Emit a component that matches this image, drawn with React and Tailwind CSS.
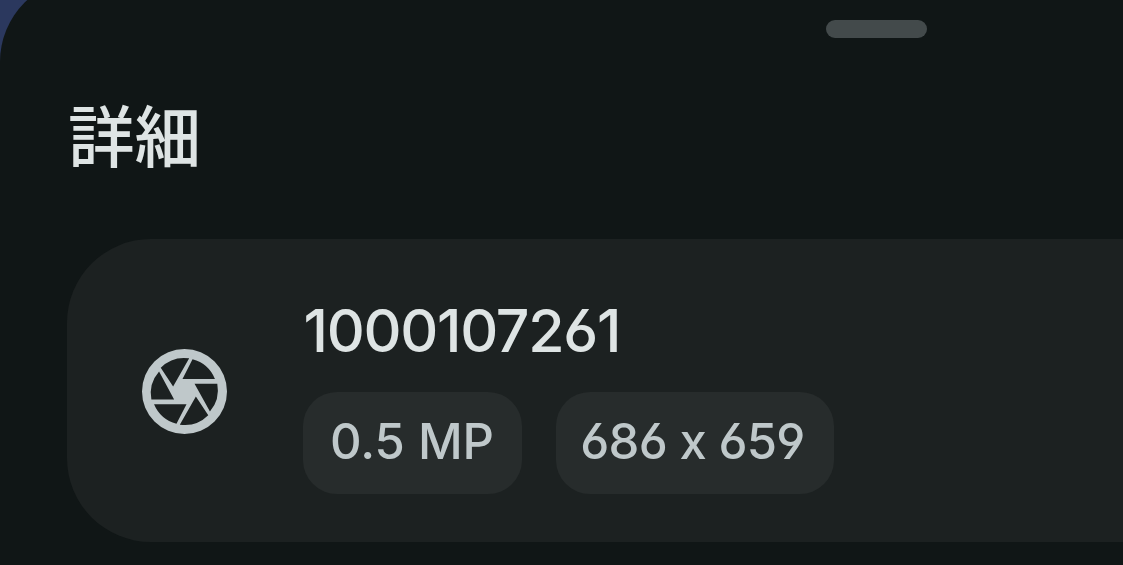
import React from 'react';

const ApertureIcon = ({ className }) => (
    <svg viewBox="0 0 254 254" fill="currentColor" fillRule="evenodd" className={className} aria-hidden="true">
        {/* Ring with the six openings between the blades cut out */}
        <path d="M127 0a127 127 0 1 1 0 254a127 127 0 1 1 0-254z
            M56 56L93 112L141 28A100 100 0 0 0 56 56z
            M151 31L121 90H218A100 100 0 0 0 151 31z
            M157 104L203 187A100 100 0 0 0 225 104z
            M198 198L161 142L113 226A100 100 0 0 0 198 198z
            M103 223L133 165H36A100 100 0 0 0 103 223z
            M28 151L96 151L51 67A100 100 0 0 0 28 151z" />
    </svg>
);

const Chip = ({ children, className }) => (
    <span className={`flex h-[102px] items-center justify-center rounded-[34px] bg-[#272c2c] pb-0.5 text-[49px] font-medium leading-none whitespace-nowrap text-[#bfc8ca] ${className}`}>
        {children}
    </span>
);

const App = () => {
    return (
        <div className="h-[565px] w-full overflow-hidden bg-[#2b385e] font-['Inter','Noto_Sans_CJK_JP',sans-serif] [font-feature-settings:'calt'_0,'cv03'_1,'cv04'_1]">
            {/* Bottom sheet */}
            <div className="-mt-[22px] flex h-[587px] flex-col rounded-tl-[84px] bg-[#101616] pl-[67px]">
                {/* Drag handle */}
                <div className="mt-[42px] ml-[759px] h-[18px] w-[101px] shrink-0 rounded-full bg-[#434a4b]" />

                <h1 className="mt-[62px] h-[66px] pl-px text-[66.5px] font-medium leading-[66px] text-[#dee4e4] font-['Noto_Sans_CJK_JP',sans-serif]">
                    詳細
                </h1>

                {/* File details */}
                <section className="mt-[73px] flex h-[303px] shrink-0 items-center rounded-l-[84px] bg-[#1c2121] pt-px pl-[75px]">
                    <ApertureIcon className="size-[85px] shrink-0 text-[#bfc8ca]" />
                    <div className="ml-[75.5px] flex flex-col pt-[11px]">
                        <h2 className="h-[60px] pt-px pl-px text-[59px] font-medium leading-[60px] tracking-[-1.3px] text-[#dee4e4]">
                            1000107261
                        </h2>
                        <div className="mt-[32px] flex gap-[34px]">
                            <Chip className="w-[219px]">0.5 MP</Chip>
                            <Chip className="w-[278px] pr-1 tracking-[-0.7px]">686 x 659</Chip>
                        </div>
                    </div>
                </section>
            </div>
        </div>
    );
};

export default App;
